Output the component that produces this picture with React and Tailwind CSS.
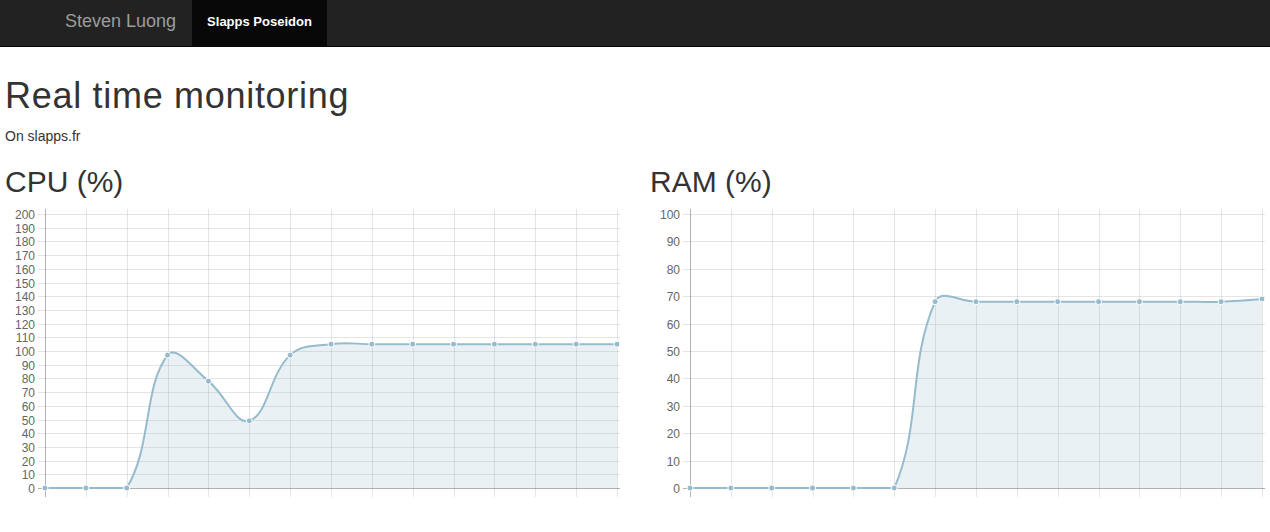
import React from 'react';

const W = 617;
const H = 300;
const AXIS_X = 40;
const ZERO_Y = 281;
const TOP_Y = 7;
const LAST_X = 612;

const cpuData = [0, 0, 0, 97, 78, 49, 97, 105, 105, 105, 105, 105, 105, 105, 105];
const ramData = [0, 0, 0, 0, 0, 0, 68, 68, 68, 68, 68, 68, 68, 68, 69];

// Chart.js 1.x style spline
const spline = (a, b, c, t) => {
  const d01 = Math.hypot(b.x - a.x, b.y - a.y);
  const d12 = Math.hypot(c.x - b.x, c.y - b.y);
  const sum = d01 + d12 || 1;
  const fa = (t * d01) / sum;
  const fb = (t * d12) / sum;
  return {
    inner: { x: b.x - fa * (c.x - a.x), y: b.y - fa * (c.y - a.y) },
    outer: { x: b.x + fb * (c.x - a.x), y: b.y + fb * (c.y - a.y) },
  };
};

const clampY = (y) => Math.min(ZERO_Y, Math.max(TOP_Y, y));

const LineChart = ({ data, max, step }) => {
  const rows = max / step;
  const stepX = (LAST_X - AXIS_X) / (data.length - 1);
  const yFor = (v) => ZERO_Y - (v / max) * (ZERO_Y - TOP_Y);

  const pts = data.map((v, i) => ({ x: AXIS_X + i * stepX, y: yFor(v) }));
  pts.forEach((p, i) => {
    const prev = pts[i - 1] || p;
    const next = pts[i + 1] || p;
    const t = i > 0 && i < pts.length - 1 ? 0.4 : 0;
    const cp = spline(prev, p, next, t);
    cp.inner.y = clampY(cp.inner.y);
    cp.outer.y = clampY(cp.outer.y);
    p.cp = cp;
  });

  let line = `M${pts[0].x},${pts[0].y}`;
  for (let i = 1; i < pts.length; i++) {
    const a = pts[i - 1].cp.outer;
    const b = pts[i].cp.inner;
    line += ` C${a.x},${a.y} ${b.x},${b.y} ${pts[i].x},${pts[i].y}`;
  }
  const area = `${line} L${pts[pts.length - 1].x},${ZERO_Y} L${pts[0].x},${ZERO_Y} Z`;

  const labels = [];
  for (let r = 0; r <= rows; r++) labels.push(r * step);

  return (
    <svg width={W} height={H} className="block" style={{ fontFamily: '"Liberation Sans", Arial, sans-serif' }}>
      {/* horizontal grid */}
      {labels.map((v) => {
        const y = Math.round(yFor(v)) + 0.5;
        return (
          <g key={v}>
            <line x1={33} x2={615} y1={y} y2={y} stroke={v === 0 ? 'rgba(0,0,0,0.3)' : 'rgba(0,0,0,0.1)'} strokeWidth="1" />
            <text x={30} y={y + 4} textAnchor="end" fontSize="12" fill="#666">{v}</text>
          </g>
        );
      })}
      {/* vertical grid */}
      {pts.map((p, i) => {
        const x = Math.round(p.x) + 0.5;
        return (
          <line key={i} x1={x} x2={x} y1={2} y2={290} stroke={i === 0 ? 'rgba(0,0,0,0.3)' : 'rgba(0,0,0,0.1)'} strokeWidth="1" />
        );
      })}
      <path d={area} fill="rgba(151,187,205,0.2)" />
      <path d={line} fill="none" stroke="#97bbcd" strokeWidth="2" />
      {pts.map((p, i) => (
        <circle key={i} cx={p.x} cy={p.y} r="3" fill="#97bbcd" stroke="#fff" strokeWidth="1" />
      ))}
    </svg>
  );
};

const App = () => {
  return (
    <div className="min-h-screen bg-white text-[#333]" style={{ fontFamily: '"Liberation Sans", Arial, sans-serif' }}>
      {/* Navbar */}
      <div className="flex h-[47px] border-b border-[#080808] bg-[#222222] pl-[50px]">
        <a className="px-[15px] pt-[11px] text-[18px] leading-[20px] text-[#9d9d9d]">Steven Luong</a>
        <a className="ml-px bg-[#080808] px-[15px] pt-[12px] text-[13px] font-bold leading-[20px] text-white">Slapps Poseidon</a>
      </div>

      <div className="pl-[5px]">
        <h1 className="mb-[10px] mt-[29px] text-[36px] font-normal leading-[1.1] tracking-[0.7px]">Real time monitoring</h1>
        <p className="text-[14px] leading-[20px]">On slapps.fr</p>

        <div className="mt-[19px] flex">
          <div className="w-[645px]">
            <h2 className="mb-[9px] text-[30px] font-normal leading-[1.1]">CPU (%)</h2>
            <LineChart data={cpuData} max={200} step={10} />
          </div>
          <div className="flex-1">
            <h2 className="mb-[9px] text-[30px] font-normal leading-[1.1]">RAM (%)</h2>
            <LineChart data={ramData} max={100} step={10} />
          </div>
        </div>
      </div>
    </div>
  );
};

export default App;
